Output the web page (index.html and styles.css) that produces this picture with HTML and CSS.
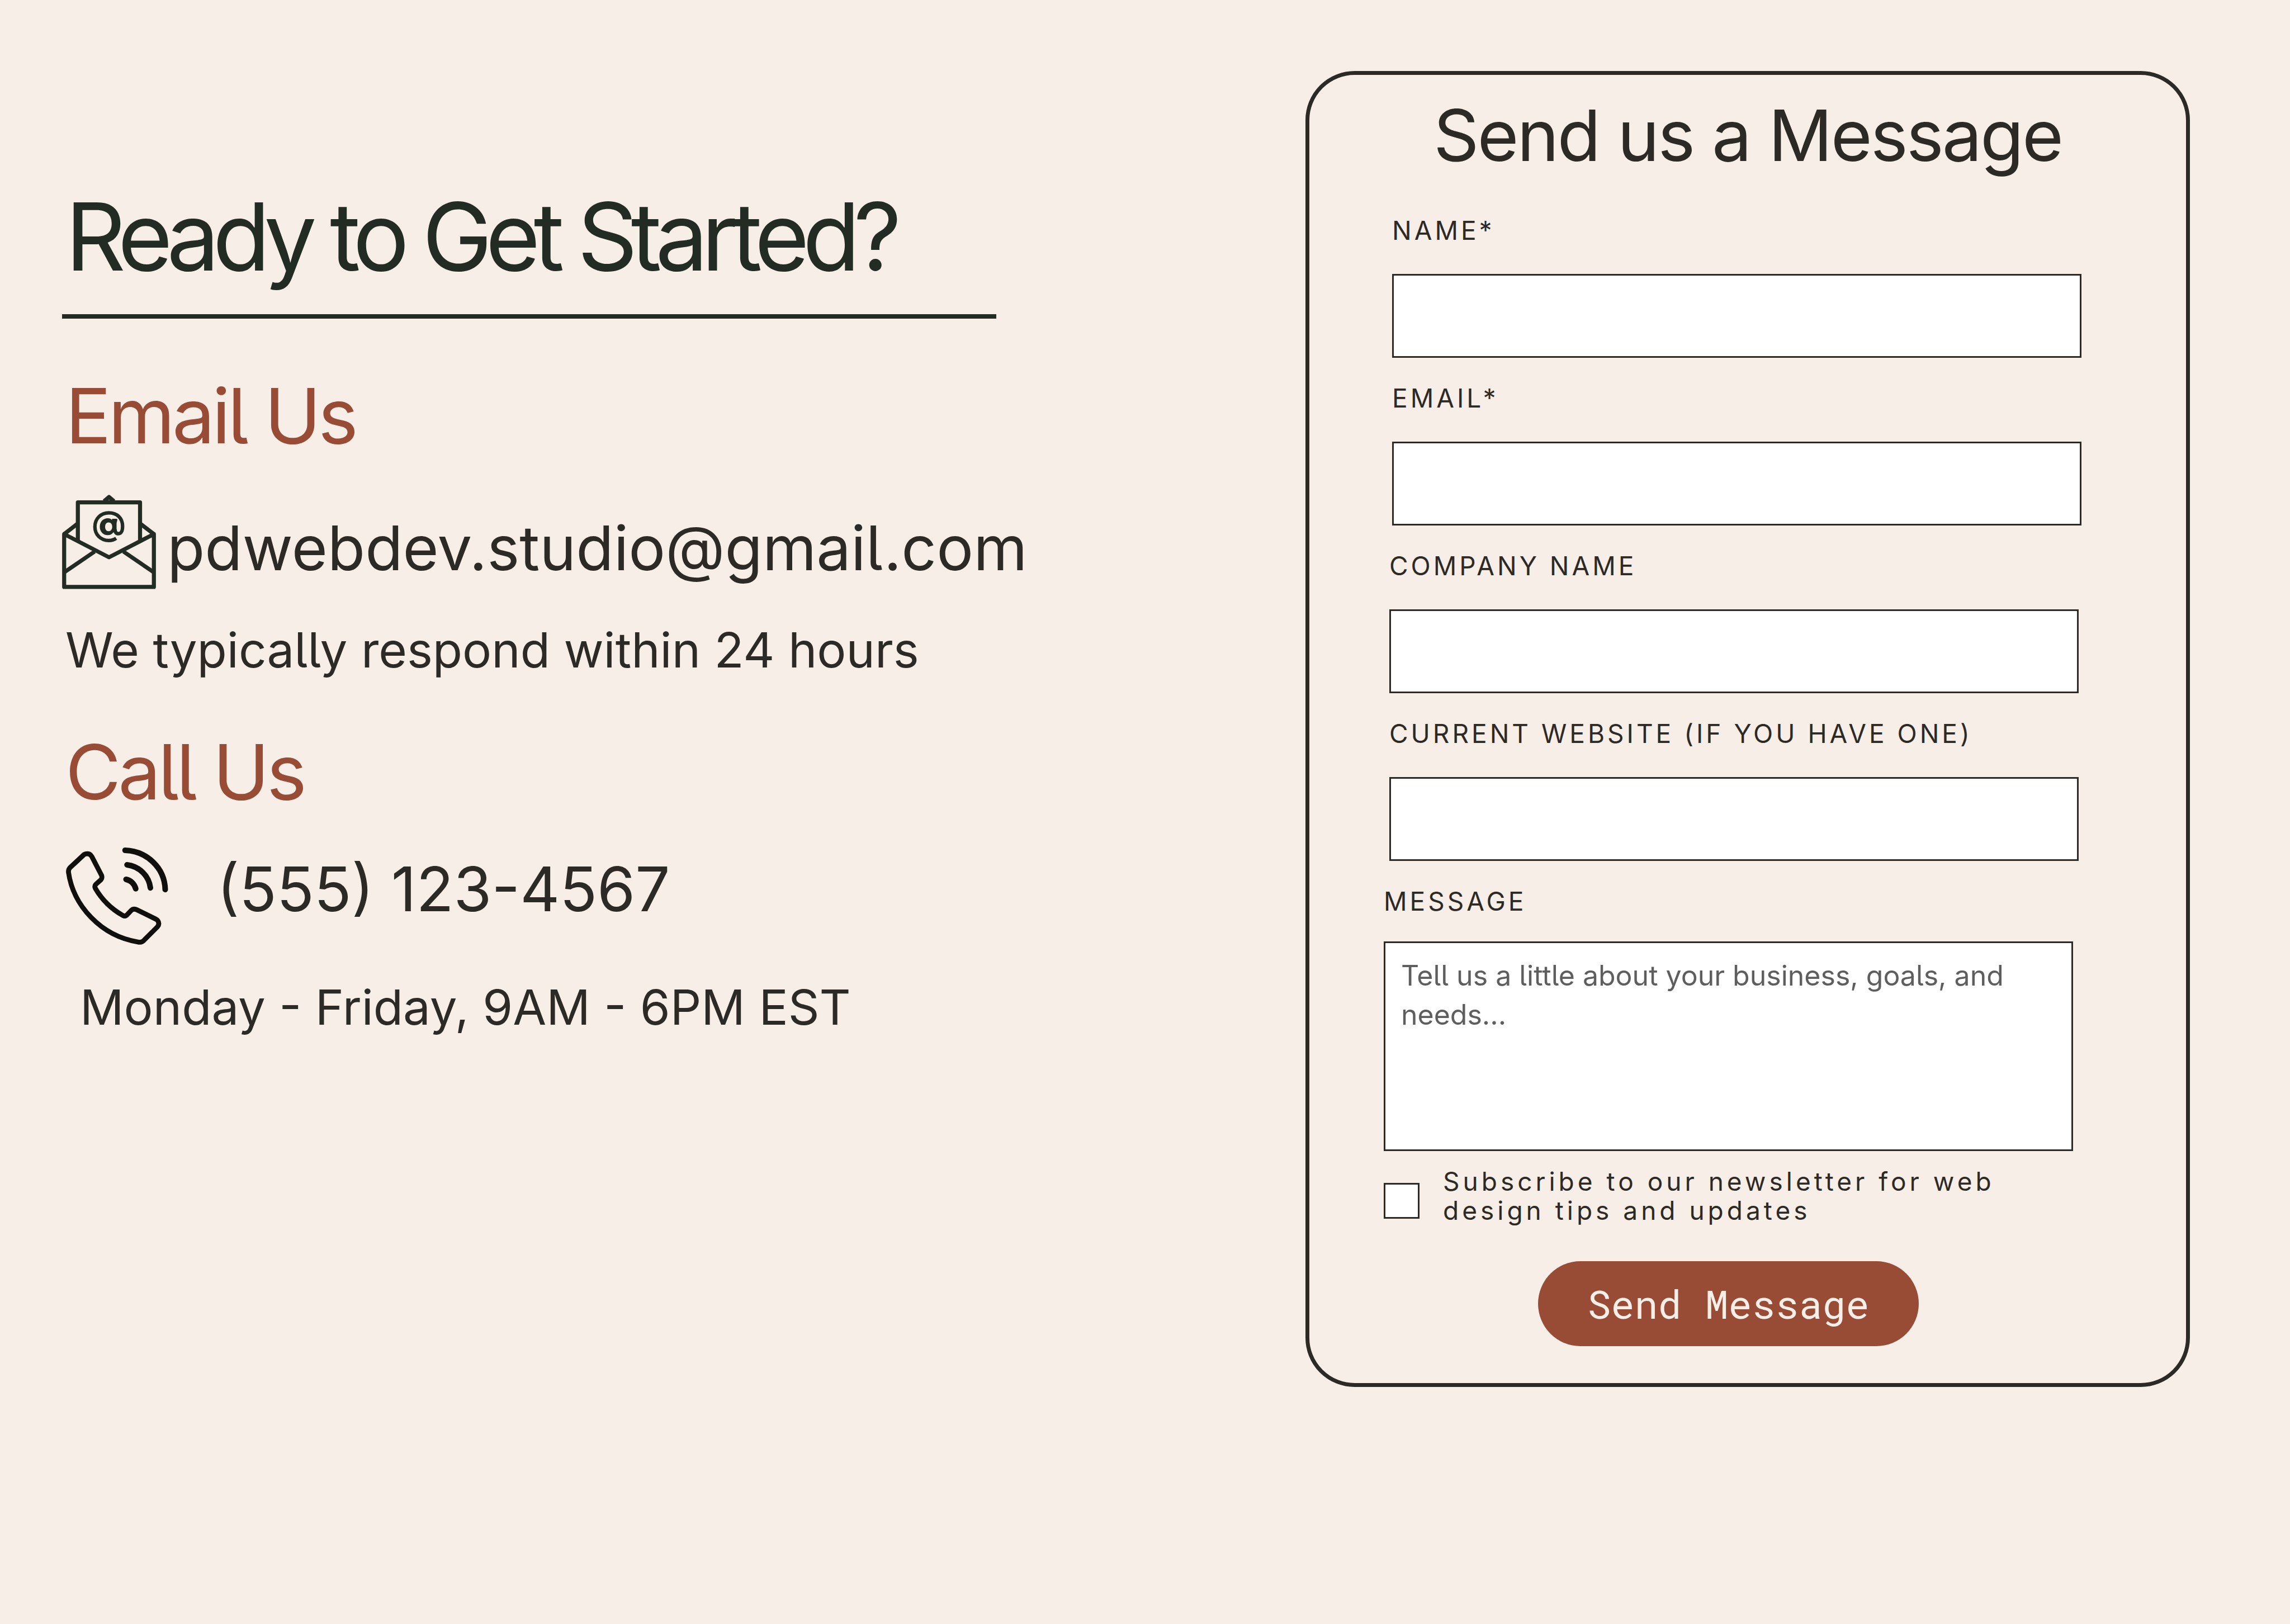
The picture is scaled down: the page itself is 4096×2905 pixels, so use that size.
FILE: index.html
```html
<!DOCTYPE html>
<html lang="en">
<head>
<meta charset="utf-8">
<title>Contact</title>
<link rel="stylesheet" href="styles.css">
</head>
<body>
<main class="page">
  <section class="contact">
    <h1 class="contact-title">Ready to Get Started?</h1>

    <h2 class="contact-heading">Email Us</h2>
    <div class="contact-row contact-row--email">
      <svg class="icon-mail" viewBox="57 60 672 675" fill="none" stroke="currentColor" stroke-width="29" stroke-linejoin="round" aria-hidden="true">
        <path d="M72 341V719H714V341L393 507Z"/>
        <path d="M170 390V114H615V390"/>
        <path d="M72 341L170 265M714 341L615 265M72 615L290 466M714 615L496 466"/>
        <path d="M358 106L393 76L428 106"/>
        <path d="M444 371C428 382 410 387 392 387C334 387 292 345 292 288C292 231 334 189 392 189C452 189 490 228 490 285C490 320 478 338 461 338C445 338 436 328 436 306" stroke-width="25"/>
        <path d="M385 227C351 227 327 253 327 288C327 323 351 348 383 348C402 348 416 340 424 328L447 318V262L453 238Q453 231 446 231H416L414 239Q403 227 385 227ZM390 257C406 257 416 270 416 288C416 307 406 320 390 320C374 320 365 307 365 288C365 270 374 257 390 257Z" fill="currentColor" fill-rule="evenodd" stroke="none"/>
      </svg>
      <a class="contact-link" href="mailto:pdwebdev.studio@gmail.com">pdwebdev.studio@gmail.com</a>
    </div>
    <p class="contact-note contact-note--email">We typically respond within 24 hours</p>

    <h2 class="contact-heading contact-heading--call">Call Us</h2>
    <div class="contact-row contact-row--call">
      <svg class="icon-phone" viewBox="84 93 732 696" fill="none" stroke="currentColor" stroke-width="35" stroke-linejoin="round" stroke-linecap="round" aria-hidden="true">
        <path d="M214 143L112 238Q101 249 102 270C136 508 332 725 598 769Q622 775 638 761L738 661Q756 640 741 617Q737 610 728 606L594 540Q567 526 548 546L521 575Q509 588 492 580C407 532 342 468 294 385Q286 369 298 356L334 324Q345 312 339 293L269 158Q258 137 237 137Q224 137 214 143Z"/>
        <path d="M507 113C660 119 790 235 794 394M521 217C608 228 678 295 688 382M514 321C548 328 574 354 583 388" stroke-width="40"/>
      </svg>
      <a class="contact-link" href="tel:+15551234567">(555) 123-4567</a>
    </div>
    <p class="contact-note contact-note--hours">Monday - Friday, 9AM - 6PM EST</p>
  </section>

  <section class="card">
    <h2 class="card-title">Send us a Message</h2>
    <form class="form">
      <div class="group group--required">
        <div class="field">
          <label class="label" for="name">NAME*</label>
          <input class="input" id="name" type="text" required>
        </div>
        <div class="field">
          <label class="label" for="email">EMAIL*</label>
          <input class="input" id="email" type="email" required>
        </div>
      </div>
      <div class="group group--company">
        <div class="field">
          <label class="label" for="company">COMPANY NAME</label>
          <input class="input" id="company" type="text">
        </div>
        <div class="field">
          <label class="label" for="website">CURRENT WEBSITE (IF YOU HAVE ONE)</label>
          <input class="input" id="website" type="text">
        </div>
      </div>
      <div class="group group--message">
        <div class="field field--message">
          <label class="label" for="message">MESSAGE</label>
          <textarea class="textarea" id="message" placeholder="Tell us a little about your business, goals, and needs..."></textarea>
        </div>
        <div class="consent">
          <input class="checkbox" id="newsletter" type="checkbox">
          <label class="consent-label" for="newsletter">Subscribe to our newsletter for web design tips and updates</label>
        </div>
        <button class="button" type="submit">Send Message</button>
      </div>
    </form>
  </section>
</main>
</body>
</html>
```
FILE: styles.css
```css
:root {
  --cream: #f6eee7;
  --ink: #2d2a25;
  --forest: #222c23;
  --rust: #984c35;
}

* {
  box-sizing: border-box;
}

body {
  margin: 0;
  min-height: 100vh;
  background: var(--cream);
  color: var(--ink);
  font-family: Inter, "Liberation Sans", sans-serif;
}

h1,
h2,
p {
  margin: 0;
  font-weight: 400;
}

.page {
  display: grid;
  grid-template-columns: 1750fr 1582fr;
  align-items: start;
  gap: 474px;
  padding: 127px 179px 127px 111px;
}

/* Contact details */

.contact {
  padding-top: 196px;
  font-feature-settings: "cv05";
}

.contact-title {
  margin-right: 79px;
  padding: 0 0 39px 6px;
  border-bottom: 8px solid var(--forest);
  color: var(--forest);
  font-size: 168px;
  line-height: 200px;
  letter-spacing: -12px;
}

.contact-heading {
  margin-top: 94px;
  padding-left: 6px;
  color: var(--rust);
  font-size: 136px;
  line-height: 160px;
  letter-spacing: -5px;
}

.contact-heading--call {
  margin-top: 82px;
}

.contact-row {
  display: flex;
}

.contact-row--email {
  align-items: flex-end;
  gap: 20px;
  margin-top: 61px;
}

.contact-row--call {
  align-items: flex-start;
  gap: 87px;
  margin-top: 55px;
  padding-left: 7px;
}

.icon-mail {
  flex: none;
  width: 168px;
  height: 169px;
  color: var(--forest);
}

.icon-phone {
  flex: none;
  width: 183px;
  height: 174px;
  color: #100f0c;
}

.contact-link {
  color: inherit;
  font-size: 110px;
  line-height: 148px;
  text-decoration: none;
}

.contact-note {
  font-size: 87px;
  line-height: 112px;
}

.contact-note--email {
  margin-top: 53px;
  padding-left: 6px;
}

.contact-note--hours {
  margin-top: 56px;
  padding-left: 32px;
}

/* Message form */

.card {
  padding: 31px 0 66px;
  border: 7px solid var(--ink);
  border-radius: 88px;
}

.card-title {
  font-size: 127px;
  line-height: 154px;
  letter-spacing: -3px;
  text-align: center;
}

.form {
  display: flex;
  flex-direction: column;
  gap: 44px;
  margin-top: 65px;
  padding: 0 187px 0 133px;
}

.group {
  display: flex;
  flex-direction: column;
  gap: 44px;
}

.group--required {
  margin-left: 15px;
}

.group--company {
  margin: 0 5px 0 10px;
}

.group--message {
  gap: 0;
  margin-right: 15px;
}

.field {
  display: flex;
  flex-direction: column;
  gap: 50px;
}

.field--message {
  gap: 44px;
}

.label {
  font-size: 46px;
  line-height: 56px;
  letter-spacing: 5px;
}

.input,
.textarea {
  width: 100%;
  margin: 0;
  border: 3px solid var(--ink);
  border-radius: 0;
  background: #fff;
  color: var(--ink);
  font-family: inherit;
  font-size: 50px;
  outline: 0;
}

.input {
  height: 150px;
  padding: 0 28px;
}

.textarea {
  display: block;
  height: 375px;
  padding: 23px 28px;
  font-feature-settings: "cv05";
  line-height: 70px;
  resize: none;
}

.textarea::placeholder {
  color: #5e5e5e;
  opacity: 1;
}

.consent {
  display: flex;
  align-items: flex-end;
  gap: 42px;
  margin-top: 28px;
}

.checkbox {
  flex: none;
  width: 64px;
  height: 64px;
  margin: 0 0 11px;
  border: 3px solid var(--ink);
  background: #fff;
  appearance: none;
}

.checkbox:checked {
  background: var(--rust);
}

.consent-label {
  font-size: 46px;
  line-height: 52px;
  letter-spacing: 6px;
}

.button {
  align-self: center;
  height: 152px;
  margin-top: 65px;
  padding: 0 88px;
  border: 0;
  border-radius: 76px;
  background: var(--rust);
  color: var(--cream);
  font-family: "Roboto Mono", "Liberation Mono", monospace;
  font-size: 70px;
}
```
